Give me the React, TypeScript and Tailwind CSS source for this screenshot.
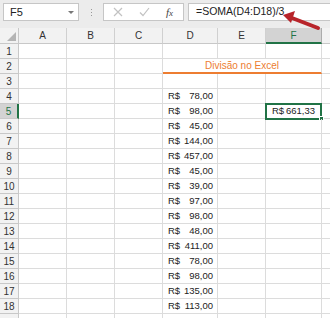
import React from 'react';

const valores = [
  null, null, null,
  '78,00', '98,00', '45,00', '144,00', '457,00', '45,00', '39,00',
  '97,00', '98,00', '48,00', '411,00', '78,00', '98,00', '135,00', '113,00',
  null,
];

const colunas = [
  { nome: 'A', w: 'w-[48px]' },
  { nome: 'B', w: 'w-[48px]' },
  { nome: 'C', w: 'w-[48px]' },
  { nome: 'D', w: 'w-[55px]' },
  { nome: 'E', w: 'w-[48px]' },
  { nome: 'F', w: 'w-[56px]' },
];

function Moeda({ valor }: { valor: string }) {
  return (
    <div className="flex h-full items-center justify-between pl-[5px] pr-[4px] text-[9.5px]">
      <span>R$</span>
      <span>{valor}</span>
    </div>
  );
}

export default function App() {
  return (
    <div
      className="relative h-[318px] w-[330px] overflow-hidden bg-white text-[10px] text-[#222]"
      style={{ fontFamily: '"Liberation Sans", Arial, sans-serif' }}
    >
      {/* Barra de fórmulas */}
      <div className="h-[28px] bg-[#ececec] pt-[3px]">
        <div className="flex h-[18px] items-stretch">
          <div className="ml-[3px] flex w-[76px] items-center justify-between border border-[#c6c6c6] bg-white pl-[6px] pr-[4px] text-[11px]">
            <span>F5</span>
            <span className="h-0 w-0 border-x-[3px] border-t-[3px] border-x-transparent border-t-[#777]" />
          </div>
          <div className="flex w-[24px] flex-col items-center justify-center gap-[2px]">
            <span className="h-[1px] w-[1px] bg-[#999]" />
            <span className="h-[1px] w-[1px] bg-[#999]" />
            <span className="h-[1px] w-[1px] bg-[#999]" />
          </div>
          <div className="flex w-[81px] items-center border border-[#c6c6c6] bg-white">
            <svg width="10" height="10" viewBox="0 0 10 10" className="ml-[9px]">
              <path d="M1 1 L9 9 M9 1 L1 9" stroke="#c2c2c2" strokeWidth="1.2" />
            </svg>
            <svg width="11" height="10" viewBox="0 0 11 10" className="ml-[16px]">
              <path d="M1 5.5 L4 8.5 L10 1" stroke="#c2c2c2" strokeWidth="1.2" fill="none" />
            </svg>
            <span
              className="ml-[16px] text-[11px] italic text-[#444]"
              style={{ fontFamily: '"Liberation Serif", serif' }}
            >
              f<span className="text-[9px]">x</span>
            </span>
          </div>
          <div className="ml-[4px] flex flex-1 items-center border border-[#c6c6c6] border-r-0 bg-white pl-[7px] text-[10.5px]">
            =SOMA(D4:D18)/3
          </div>
        </div>
      </div>

      {/* Cabeçalho das colunas */}
      <div className="flex h-[16px] bg-[#f2f2f2]">
        <div className="relative w-[19px] border-r border-b border-[#c8c8c8]">
          <span className="absolute bottom-[2px] right-[2px] h-0 w-0 border-b-[9px] border-l-[9px] border-b-[#b4b4b4] border-l-transparent" />
        </div>
        {colunas.map((c) => (
          <div
            key={c.nome}
            className={
              c.nome === 'F'
                ? `${c.w} flex items-center justify-center border-r border-b-2 border-r-[#ababab] border-b-[#217346] bg-[#d3d3d3] text-[#217346]`
                : `${c.w} flex items-center justify-center border-r border-b border-r-[#d0d0d0] border-b-[#c8c8c8] text-[#333]`
            }
          >
            {c.nome}
          </div>
        ))}
        <div className="flex-1 border-b border-[#c8c8c8]" />
      </div>

      {/* Linhas */}
      {valores.map((v, i) => {
        const linha = i + 1;
        const ativa = linha === 5;
        return (
          <div key={linha} className="flex h-[15px]">
            <div
              className={
                ativa
                  ? 'flex w-[19px] items-center justify-center border-r-2 border-b border-r-[#217346] border-b-[#c8c8c8] bg-[#d3d3d3] text-[#217346]'
                  : 'flex w-[19px] items-center justify-center border-r border-b border-[#c8c8c8] bg-[#f2f2f2] text-[#333]'
              }
            >
              {linha < 19 ? linha : null}
            </div>
            <div className="w-[48px] border-r border-b border-[#dcdcdc]" />
            <div className="w-[48px] border-r border-b border-[#dcdcdc]" />
            <div className="w-[48px] border-r border-b border-[#dcdcdc]" />
            {linha === 2 ? (
              <div className="flex w-[159px] items-center justify-center border-r border-b-2 border-r-[#dcdcdc] border-b-[#ed7d31] text-[#ed7d31]">
                Divisão no Excel
              </div>
            ) : (
              <>
                <div className="w-[55px] border-r border-b border-[#dcdcdc]">
                  {v && <Moeda valor={v} />}
                </div>
                <div className="w-[48px] border-r border-b border-[#dcdcdc]" />
                <div className="relative w-[56px] border-r border-b border-[#dcdcdc]">
                  {ativa && (
                    <>
                      <div className="flex h-full items-center justify-between pl-[6px] pr-[6px] text-[9.5px]">
                        <span>R$</span>
                        <span>661,33</span>
                      </div>
                      <span className="absolute -left-[1px] -top-[1px] h-[17px] w-[57px] border-2 border-[#217346]" />
                      <span className="absolute -bottom-[3px] -right-[3px] h-[5px] w-[5px] border border-white bg-[#217346]" />
                    </>
                  )}
                </div>
              </>
            )}
            <div className="flex-1 border-b border-[#dcdcdc]" />
          </div>
        );
      })}

      {/* Seta vermelha */}
      <svg
        className="absolute left-[278px] top-[10px]"
        width="46"
        height="24"
        viewBox="0 0 46 24"
      >
        <path d="M40 18 L14 8" stroke="#b8242a" strokeWidth="4" strokeLinecap="round" />
        <path d="M5 5 L17 1 L13 13 Z" fill="#b8242a" />
      </svg>
    </div>
  );
}
